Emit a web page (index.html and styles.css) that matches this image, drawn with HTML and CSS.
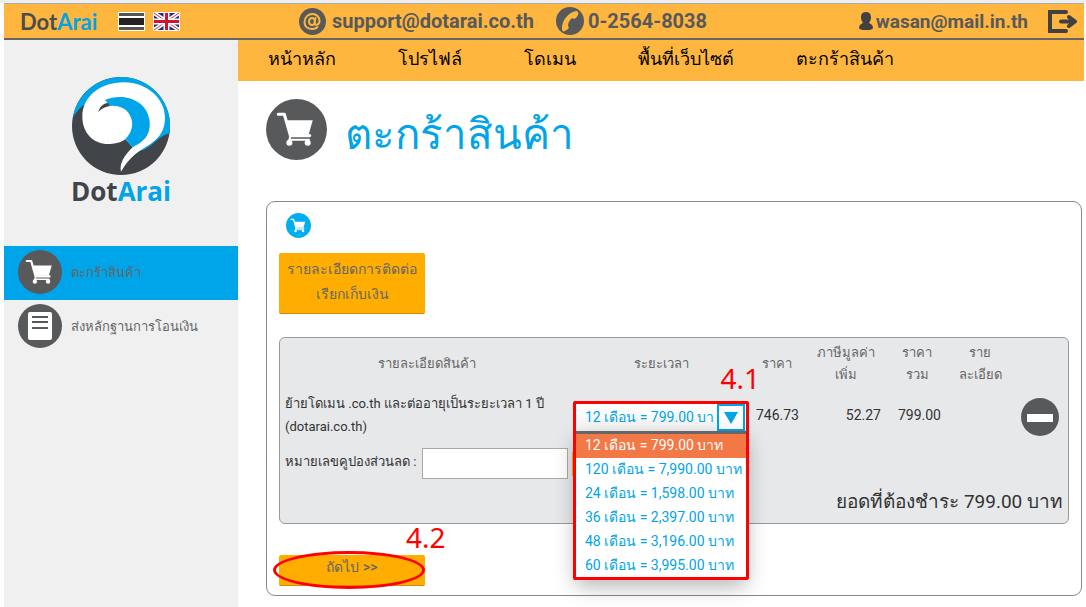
FILE: index.html
```html
<!DOCTYPE html>
<html lang="th">
<head>
<meta charset="utf-8">
<meta name="viewport" content="width=device-width, initial-scale=1">
<title>DotArai</title>
<link rel="stylesheet" href="styles.css">
</head>
<body>

<!-- shared icons -->
<svg class="sprite" aria-hidden="true">
  <symbol id="cart" viewBox="0 0 60 60">
    <circle cx="30" cy="30" r="30" fill="currentColor"/>
    <path d="M12 15h6l6 21h19" fill="none" stroke="#fff" stroke-width="3" stroke-linecap="round" stroke-linejoin="round"/>
    <path d="M19 21h27l-4 14H23z" fill="#fff"/>
    <path d="M24 36l-1 4h20" fill="none" stroke="#fff" stroke-width="2"/>
    <circle cx="23" cy="43" r="3" fill="#fff"/>
    <circle cx="41" cy="43" r="3" fill="#fff"/>
  </symbol>
</svg>

<header class="topbar">
  <a class="brand" href="#">Dot<span>Arai</span></a>
  <div class="flags">
    <a href="#" aria-label="ไทย">
      <svg width="27" height="19" viewBox="0 0 27 19">
        <path fill="#fff" d="M0 0h27v19H0z"/>
        <path fill="#555" d="M1 1h25v3H1zM1 15h25v3H1z"/>
        <path fill="#222" d="M1 6h25v7H1z"/>
      </svg>
    </a>
    <a href="#" aria-label="English">
      <svg width="27" height="19" viewBox="0 0 27 19">
        <path fill="#fff" d="M0 0h27v19H0z"/>
        <path fill="#22307c" d="M1 1h25v17H1z"/>
        <path d="M1 1l25 17M26 1L1 18" stroke="#fff" stroke-width="4"/>
        <path d="M1 1l25 17M26 1L1 18" stroke="#d3304a" stroke-width="1"/>
        <path d="M13.5 1v17M1 9.5h25" stroke="#fff" stroke-width="6"/>
        <path d="M13.5 1v17M1 9.5h25" stroke="#cf1430" stroke-width="3"/>
      </svg>
    </a>
  </div>
  <a class="contact mail" href="mailto:support@dotarai.co.th">
    <svg width="27" height="27" viewBox="0 0 27 27">
      <circle cx="13.5" cy="13.5" r="13.5" fill="#58595b"/>
      <g fill="none" stroke="#ffb63f" stroke-width="2" stroke-linecap="round">
        <ellipse cx="13" cy="13.5" rx="3" ry="3.5"/>
        <path d="M16.5 10l-1 5c0 3 5 2 5-2 0-4-3-7-7-7s-8 3-8 8 4 7 8 7c2 0 4-1 5-2"/>
      </g>
    </svg>
    support@dotarai.co.th
  </a>
  <a class="contact phone" href="tel:025648038">
    <svg width="28" height="28" viewBox="0 0 28 28">
      <circle cx="14" cy="14" r="14" fill="#58595b"/>
      <path d="M20 4c2 0 3 2 2 4l-2 3c-1 1-3 1-4 0-3 3-4 5-4 8 1 1 1 2 0 3l-3 2c-2 1-3 0-3-3C6 13 13 5 20 4z" fill="#ffb63f"/>
    </svg>
    0-2564-8038
  </a>
  <a class="contact user" href="#">
    <svg width="14" height="18" viewBox="0 0 14 18">
      <path d="M7 0c4 0 5 3 5 5 0 3-1 4-2 6 2 1 4 2 4 5-1 3-13 3-14 0 0-3 2-4 4-5-1-2-2-3-2-6 0-2 1-5 5-5z" fill="#414042"/>
    </svg>
    wasan@mail.in.th
  </a>
  <button class="logout" type="button" aria-label="ออกจากระบบ">
    <svg width="29" height="23" viewBox="0 0 29 23">
      <path d="M18 2H2v19h16" fill="none" stroke="#414042" stroke-width="4" stroke-linecap="round"/>
      <path d="M13 11.5h12M21 7l6 4.500-6 4.500" fill="none" stroke="#414042" stroke-width="4" stroke-linecap="round" stroke-linejoin="round"/>
    </svg>
  </button>
</header>

<div class="layout">
  <aside class="sidebar">
    <a class="logo" href="#">
      <svg width="98" height="98" viewBox="216 231 294 294">
        <circle cx="363" cy="378" r="147" fill="#414549"/>
        <path fill="#00a4e8" d="M218 355C227 337 239 325 250 316L376 418 398 442 430 451C468 430 476 408 509 400A147 147 0 0 0 363 231 147 147 0 0 0 218 355z"/>
        <path fill="#fff" d="M247 350C247 290 300 247 372 247 445 247 495 300 495 352 495 405 465 425 425 449 395 467 377 490 363 515 357 490 375 464 398 442L376 418C360 430 340 432 325 432 280 432 247 398 247 350z"/>
        <path fill="#00a4e8" d="M315 300C345 286 392 286 422 312 450 336 458 380 440 408 430 424 415 432 398 442L375 418C395 400 398 378 396 364 391 334 366 314 330 318z"/>
        <path fill="#414549" d="M295 336C299 321 309 310 324 309L330 318C316 320 304 326 295 336z"/>
      </svg>
      <strong>Dot<span>Arai</span></strong>
    </a>
    <ul class="menu">
      <li class="active">
        <a href="#"><svg class="menu-icon"><use href="#cart"/></svg>ตะกร้าสินค้า</a>
      </li>
      <li>
        <a href="#">
          <svg class="menu-icon" viewBox="0 0 44 44">
            <circle cx="22" cy="22" r="22" fill="#58595b"/>
            <rect x="10" y="8" width="24" height="28" rx="2" fill="#fff"/>
            <path d="M14 13h16M14 18h16M14 24h16" stroke="#58595b" stroke-width="2"/>
          </svg>ส่งหลักฐานการโอนเงิน</a>
      </li>
    </ul>
  </aside>

  <div class="content">
    <nav class="mainnav">
      <a href="#">หน้าหลัก</a>
      <a href="#">โปรไฟล์</a>
      <a href="#">โดเมน</a>
      <a href="#">พื้นที่เว็บไซต์</a>
      <a href="#">ตะกร้าสินค้า</a>
    </nav>

    <main>
      <h1><svg class="title-icon"><use href="#cart"/></svg>ตะกร้าสินค้า</h1>

      <form class="panel">
        <svg class="step-icon"><use href="#cart"/></svg>
        <button class="btn" type="button">รายละเอียดการติดต่อ<br>เรียกเก็บเงิน</button>

        <div class="cart">
          <table>
            <colgroup>
              <col>
              <col class="c-period">
              <col class="c-price">
              <col class="c-vat">
              <col class="c-total">
              <col class="c-more">
              <col class="c-remove">
            </colgroup>
            <thead>
              <tr>
                <th>รายละเอียดสินค้า</th>
                <th>ระยะเวลา</th>
                <th>ราคา</th>
                <th>ภาษีมูลค่า<br>เพิ่ม</th>
                <th>ราคา<br>รวม</th>
                <th>ราย<br>ละเอียด</th>
                <td></td>
              </tr>
            </thead>
            <tbody>
              <tr>
                <td class="item">ย้ายโดเมน .co.th และต่ออายุเป็นระยะเวลา 1 ปี<br>(dotarai.co.th)</td>
                <td>
                  <div class="picker">
                    <select aria-label="ระยะเวลา">
                      <option>12 เดือน = 799.00 บาท</option>
                      <option>120 เดือน = 7,990.00 บาท</option>
                      <option>24 เดือน = 1,598.00 บาท</option>
                      <option>36 เดือน = 2,397.00 บาท</option>
                      <option>48 เดือน = 3,196.00 บาท</option>
                      <option>60 เดือน = 3,995.00 บาท</option>
                    </select>
                    <span class="arrow"><svg width="14" height="12"><path d="M0 0h14L7 12z" fill="#00a4e8"/></svg></span>
                    <ul class="options" role="listbox" aria-label="ระยะเวลา">
                      <li role="option" aria-selected="true">12 เดือน = 799.00 บาท</li>
                      <li role="option">120 เดือน = 7,990.00 บาท</li>
                      <li role="option">24 เดือน = 1,598.00 บาท</li>
                      <li role="option">36 เดือน = 2,397.00 บาท</li>
                      <li role="option">48 เดือน = 3,196.00 บาท</li>
                      <li role="option">60 เดือน = 3,995.00 บาท</li>
                    </ul>
                    <span class="mark">4.1</span>
                  </div>
                </td>
                <td class="num">746.73</td>
                <td class="num">52.27</td>
                <td class="num">799.00</td>
                <td></td>
                <td class="remove">
                  <button type="button" aria-label="ลบ">
                    <svg width="38" height="38"><circle cx="19" cy="19" r="19" fill="#58595b"/><path d="M6 16h26v8H6z" fill="#fff"/></svg>
                  </button>
                </td>
              </tr>
            </tbody>
          </table>
          <div class="coupon">
            <label for="coupon">หมายเลขคูปองส่วนลด :</label>
            <input type="text" id="coupon">
            <button class="use" type="button" aria-label="ใช้คูปอง"></button>
          </div>
          <p class="sum">ยอดที่ต้องชำระ 799.00 บาท</p>
        </div>

        <div class="next">
          <button class="btn" type="submit">ถัดไป &gt;&gt;</button>
          <span class="ring"></span>
          <span class="mark">4.2</span>
        </div>
      </form>
    </main>
  </div>
</div>

</body>
</html>
```

FILE: styles.css
```css
* {
  box-sizing: border-box;
}

body {
  margin: 0;
  padding: 0 2px 0 4px;
  min-height: 100vh;
  display: flex;
  flex-direction: column;
  border-top: 3px solid #eee;
  background: #fff;
  font-family: Roboto, "Noto Sans", sans-serif;
  font-size: 13px;
  color: #333;
}

a {
  color: inherit;
  text-decoration: none;
}

ul {
  list-style: none;
  margin: 0;
  padding: 0;
}

button {
  font: inherit;
  border: 0;
  padding: 0;
  background: none;
}

svg {
  display: block;
  flex: none;
}

.sprite {
  position: absolute;
  width: 0;
  height: 0;
}

/* top bar */
.topbar {
  display: flex;
  align-items: center;
  height: 37px;
  padding: 0 7px 0 16px;
  background: #ffb63f;
  border-top: 1px solid #aaa;
  border-bottom: 2px solid #666;
  color: #58595b;
}

.brand {
  width: 98px;
  font-family: Lato, sans-serif;
  font-size: 22px;
  font-weight: bold;
  color: #4a4d50;
}

.brand span,
.logo span {
  color: #00a4e8;
}

.flags {
  display: flex;
  gap: 8px;
  width: 181px;
}

.contact {
  display: flex;
  align-items: center;
  gap: 6px;
  font-size: 20px;
  font-weight: bold;
}

.mail {
  width: 257px;
}

.phone {
  gap: 4px;
}

.user {
  gap: 3px;
  margin-left: auto;
  font-size: 19px;
}

.logout {
  margin-left: 20px;
}

/* left column */
.layout {
  display: flex;
  flex: 1;
}

.sidebar {
  flex: none;
  width: 234px;
  background: #f0f0f0;
}

.logo {
  display: flex;
  flex-direction: column;
  align-items: center;
  height: 206px;
  padding-top: 37px;
}

.logo strong {
  font-family: "Open Sans", sans-serif;
  font-size: 26px;
  line-height: 32px;
  color: #414549;
}

.menu a {
  display: flex;
  align-items: center;
  gap: 9px;
  height: 54px;
  padding: 0 0 2px 14px;
  color: #666;
}

.menu .active {
  background: #00a4e8;
}

.menu-icon {
  width: 44px;
  height: 44px;
  color: #58595b;
}

/* main column */
.content {
  flex: 1;
}

.mainnav {
  display: flex;
  gap: 62px;
  height: 41px;
  padding: 0 30px;
  background: #ffb63f;
  font-size: 18px;
  line-height: 38px;
  font-weight: 500;
  color: #000;
}

main {
  padding: 18px 2px 11px 28px;
}

h1 {
  display: flex;
  gap: 18px;
  height: 62px;
  margin: 0 0 40px;
  font-size: 42px;
  line-height: 72px;
  font-weight: normal;
  color: #00a4e8;
}

.title-icon {
  width: 61px;
  height: 61px;
  color: #58595b;
}

.panel {
  padding: 11px 12px 9px;
  border: 1px solid #888;
  border-radius: 9px;
}

.step-icon {
  width: 25px;
  height: 25px;
  margin: 0 0 15px 7px;
  color: #00aeef;
}

.btn {
  display: block;
  width: 146px;
  padding: 4px 0 6px;
  border-bottom: 1px solid #d58a10;
  border-radius: 2px;
  background: #ffae00;
  font-size: 14px;
  line-height: 25px;
  font-weight: 500;
  white-space: nowrap;
  color: #666;
}

/* cart box */
.cart {
  height: 187px;
  margin: 23px 0 31px;
  border: 1px solid #999;
  border-radius: 6px;
  background: #e6e8e9;
}

table {
  width: 100%;
  table-layout: fixed;
  border-collapse: collapse;
}

.c-period { width: 176px; }
.c-price { width: 56px; }
.c-vat { width: 82px; }
.c-total { width: 60px; }
.c-more { width: 66px; }
.c-remove { width: 55px; }

th {
  height: 54px;
  padding: 0 0 2px;
  font-weight: 500;
  line-height: 22px;
  color: #666;
}

td {
  padding: 0;
  vertical-align: top;
}

.item {
  padding: 0 5px;
  line-height: 23px;
}

.num {
  padding: 12px 6px 0 0;
  font-size: 14px;
  text-align: right;
  line-height: 23px;
}

.remove {
  padding: 6px 0 0 8px;
}

.picker {
  position: relative;
  margin: 12px 3px 0;
}

.picker select {
  display: block;
  width: 100%;
  height: 27px;
  padding: 0 32px 2px 9px;
  border: 0;
  border-radius: 0;
  appearance: none;
  background: linear-gradient(#fff, #f3f3f3);
  font: inherit;
  font-size: 14px;
  color: #00a4e8;
}

.arrow {
  position: absolute;
  top: 0;
  right: 1px;
  display: flex;
  align-items: center;
  justify-content: center;
  width: 28px;
  height: 27px;
  border: 2px solid #00a4e8;
  background: #fff;
  pointer-events: none;
}

.options {
  position: absolute;
  top: 27px;
  left: 0;
  right: 0;
  z-index: 1;
  border-top: 3px solid #666;
  background: #fff;
  box-shadow: 0 8px 20px rgba(0, 0, 0, 0.3);
  font-size: 14px;
  line-height: 22px;
  color: #00a4e8;
}

.options li {
  padding-left: 9px;
  height: 24px;
  white-space: nowrap;
}

.options [aria-selected="true"] {
  background: #f27846;
  color: #fff;
}

/* red frame round the open list */
.picker::after {
  content: "";
  position: absolute;
  top: -3px;
  left: -3px;
  right: -3px;
  z-index: 2;
  height: 173px;
  border: 3px solid #f00;
  border-radius: 2px;
  pointer-events: none;
}

.mark {
  position: absolute;
  font-family: "Noto Sans", sans-serif;
  font-size: 28px;
  line-height: 32px;
  color: #f00;
}

.picker .mark {
  top: -42px;
  right: -14px;
}

.coupon {
  display: flex;
  align-items: center;
  gap: 5px;
  margin-top: 9px;
  padding-left: 5px;
}

.coupon label {
  width: 132px;
  padding-bottom: 5px;
  white-space: nowrap;
}

.coupon input {
  width: 146px;
  height: 31px;
  border: 1px solid #aaa;
  background: #fff;
}

.use {
  width: 60px;
  height: 24px;
  margin-left: -1px;
  background: #ffae00;
}

.sum {
  margin: 8px 5px 0;
  font-size: 19px;
  line-height: 30px;
  text-align: right;
}

.next {
  position: relative;
}

.next .btn {
  padding: 0 0 5px;
}

.ring {
  position: absolute;
  top: -4px;
  left: -6px;
  width: 152px;
  height: 38px;
  border: 3px solid #f00;
  border-radius: 50%;
  pointer-events: none;
}

.next .mark {
  top: -34px;
  left: 127px;
}
```
